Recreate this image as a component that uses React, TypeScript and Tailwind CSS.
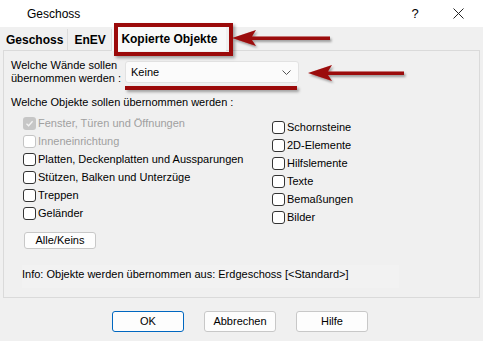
import React from 'react'

const font = { fontFamily: '"Liberation Sans", Arial, sans-serif' }

function Box({ checked, disabled }: { checked?: boolean; disabled?: boolean }) {
  if (checked && disabled) {
    return (
      <span className="w-[13px] h-[13px] rounded-[3px] bg-[#c6c6c6] flex items-center justify-center flex-shrink-0">
        <svg width="9" height="9" viewBox="0 0 9 9">
          <path d="M1.5 4.8 L3.6 6.8 L7.6 2.2" fill="none" stroke="#f4f4f4" strokeWidth="1.3" />
        </svg>
      </span>
    )
  }
  return (
    <span
      className={`w-[13px] h-[13px] rounded-[3px] border bg-white flex-shrink-0 ${
        disabled ? 'border-[#c4c4c4]' : 'border-[#333]'
      }`}
    />
  )
}

function Check({ label, checked, disabled }: { label: string; checked?: boolean; disabled?: boolean }) {
  return (
    <div className="flex items-center h-[18px] gap-[2px]">
      <Box checked={checked} disabled={disabled} />
      <span className={`text-[11px] ${disabled ? 'text-[#a0a0a0]' : 'text-black'}`}>{label}</span>
    </div>
  )
}

function Btn({ label, primary }: { label: string; primary?: boolean }) {
  return (
    <div
      className={`w-[72px] h-[21px] rounded-[3px] bg-[#fdfdfd] flex items-center justify-center text-[11px] ${
        primary ? 'border-[1.5px] border-[#0067c0]' : 'border border-[#c8c8c8]'
      }`}
    >
      {label}
    </div>
  )
}

export default function App() {
  const left = [
    { label: 'Fenster, Türen und Öffnungen', checked: true, disabled: true },
    { label: 'Inneneinrichtung', disabled: true },
    { label: 'Platten, Deckenplatten und Aussparungen' },
    { label: 'Stützen, Balken und Unterzüge' },
    { label: 'Treppen' },
    { label: 'Geländer' },
  ]
  const right = ['Schornsteine', '2D-Elemente', 'Hilfslemente', 'Texte', 'Bemaßungen', 'Bilder']

  return (
    <div className="w-[483px] h-[341px] bg-[#f0f0f0] relative overflow-hidden text-black" style={font}>
      {/* Title bar */}
      <div className="h-[27px] bg-white flex items-center">
        <span className="pl-[27px] text-[12px] flex-1">Geschoss</span>
        <span className="text-[13px] w-[16px] text-center mr-[30px]">?</span>
        <svg width="11" height="11" viewBox="0 0 11 11" className="mr-[19px]">
          <path d="M0.5 0.5 L10.5 10.5 M10.5 0.5 L0.5 10.5" stroke="#222" strokeWidth="1" />
        </svg>
      </div>

      {/* Tabs */}
      <div className="h-[23px] flex items-end pl-[3px]">
        <div className="h-[21px] pl-[3px] pr-[4px] flex items-center font-bold text-[12px] border-r border-[#dcdcdc]">Geschoss</div>
        <div className="h-[21px] px-[6px] flex items-center font-bold text-[12px] border-r border-[#dcdcdc] w-[44px]">EnEV</div>
        <div className="h-[24px] -mb-px bg-[#f9f9f9] px-[9px] flex items-center font-bold text-[12px] relative z-10">
          Kopierte Objekte
        </div>
      </div>

      {/* Page */}
      <div className="mx-[3px] h-[248px] overflow-hidden border border-[#dadada] bg-[#f0f0f0] pl-[7px] pt-[10px]">
        <div className="flex items-start h-[27px]">
          <div className="text-[11px] leading-[13px] w-[114px] -mt-[2px]">
            Welche Wände sollen
            <br />
            übernommen werden :
          </div>
          <div className="w-[174px] h-[22px] bg-[#fbfbfb] border border-[#e2e2e2] rounded-[3px] flex items-center px-[5px] text-[11px]">
            <span className="flex-1">Keine</span>
            <svg width="9" height="5" viewBox="0 0 9 5" className="mr-[2px]">
              <path d="M0.5 0.5 L4.5 4.5 L8.5 0.5" fill="none" stroke="#555" strokeWidth="1" />
            </svg>
          </div>
        </div>

        <div className="text-[11px] mt-[6px]">Welche Objekte sollen übernommen werden :</div>

        <div className="flex mt-[4px]">
          <div className="w-[248px] pl-[12px]">
            {left.map(i => (
              <Check key={i.label} label={i.label} checked={i.checked} disabled={i.disabled} />
            ))}
          </div>
          <div className="pt-[4px] pl-[13px]">
            {right.map(l => (
              <Check key={l} label={l} />
            ))}
          </div>
        </div>

        <div className="mt-[5px] ml-[13px] w-[72px] h-[17px] rounded-[3px] border border-[#c8c8c8] bg-[#fdfdfd] flex items-center justify-center text-[11px]">
          Alle/Keins
        </div>

        <div className="mt-[16px] ml-[11px] w-[377px] h-[23px] bg-[#f2f2f2] pt-[3px] text-[11px] leading-[13px]">
          Info: Objekte werden übernommen aus: Erdgeschoss [&lt;Standard&gt;]
        </div>
      </div>

      {/* Buttons */}
      <div className="flex pl-[112px] gap-[20px] mt-[13px]">
        <Btn label="OK" primary />
        <Btn label="Abbrechen" />
        <Btn label="Hilfe" />
      </div>

      {/* Annotations */}
      <div className="absolute left-[114px] top-[23px] w-[119px] h-[33px] border-[4px] border-[#9b0a0a] shadow-[2px_2px_3px_rgba(0,0,0,0.35)] z-20" />
      <div className="absolute left-[125px] top-[86px] w-[172px] h-[4px] bg-[#9b0a0a] shadow-[2px_2px_3px_rgba(0,0,0,0.35)] z-20" />
      <svg className="absolute left-[230px] top-[28px] z-20" width="104" height="22" viewBox="0 0 104 22">
        <defs>
          <filter id="sh" x="-10%" y="-30%" width="130%" height="180%">
            <feDropShadow dx="1.5" dy="2" stdDeviation="1.2" floodOpacity="0.35" />
          </filter>
        </defs>
        <path d="M2 10 L26 2 L22 8.5 L100 8.5 L100 12 L22 12 L26 18 Z" fill="#9b0a0a" filter="url(#sh)" />
      </svg>
      <svg className="absolute left-[306px] top-[63px] z-20" width="104" height="22" viewBox="0 0 104 22">
        <defs>
          <filter id="sh2" x="-10%" y="-30%" width="130%" height="180%">
            <feDropShadow dx="1.5" dy="2" stdDeviation="1.2" floodOpacity="0.35" />
          </filter>
        </defs>
        <path d="M2 10 L26 2 L22 8.5 L98 8.5 L98 12 L22 12 L26 18 Z" fill="#9b0a0a" filter="url(#sh2)" />
      </svg>
    </div>
  )
}
